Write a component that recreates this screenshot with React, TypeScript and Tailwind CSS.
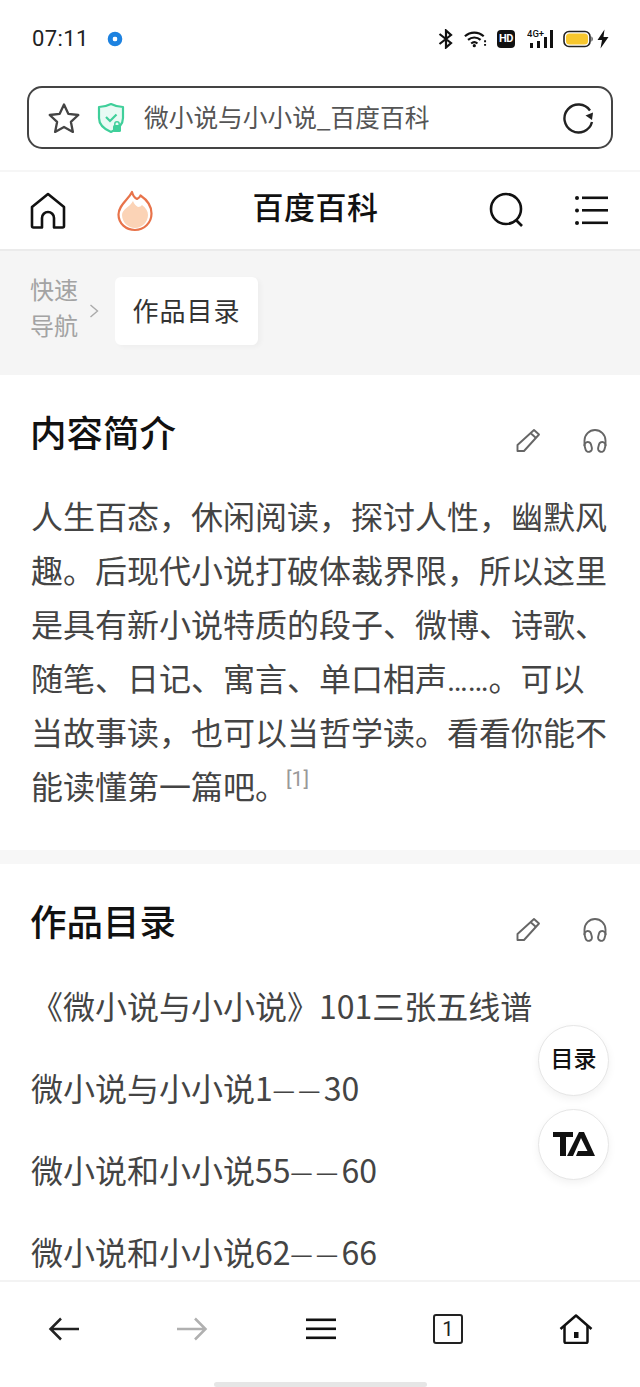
import type { ReactNode } from "react";

const cjk = "font-['Noto_Sans_CJK_SC','Noto_Sans',sans-serif]";

function StatusBar() {
    return (
        <div className="flex h-[78px] items-center justify-between pl-[32px] pr-[31px] pb-[1px]">
            <div className="flex items-center">
                <span className="font-['Roboto',sans-serif] text-[22px] leading-none tracking-[0.4px] text-[#222]">07:11</span>
                <svg width="16" height="16" viewBox="0 0 16 16" className="ml-[18px]">
                    <circle cx="8" cy="8" r="4.800" fill="none" stroke="#1d82e0" strokeWidth="5" />
                    <circle cx="8" cy="8" r="2.200" fill="#fff" />
                </svg>
            </div>
            <div className="flex items-center">
                <svg width="16" height="20" viewBox="0 0 16 20" fill="none" stroke="#111" strokeWidth="2.200">
                    <path d="M1.500 5 13 14l-5 4.500V1.500L13 6 1.500 15" />
                </svg>
                <svg width="26" height="20" viewBox="0 0 29 20" fill="none" stroke="#111" strokeWidth="2.400" className="ml-[10px]">
                    <path d="M1 7c6-5.500 15-5.500 21 0" />
                    <path d="M4.500 11c4-3.600 10-3.600 14 0" />
                    <path d="M8 15c2-1.700 5-1.700 7 0" />
                    <circle cx="11.500" cy="17.500" r="1.800" fill="#111" stroke="none" />
                    <path d="M23.500 11.500v2M23.500 15.500v2" strokeWidth="2.200" />
                </svg>
                <span className="ml-[7px] flex h-[18px] w-[18px] items-center justify-center rounded-[4px] bg-[#111] font-['Roboto',sans-serif] text-[11px] leading-none font-bold tracking-[-0.5px] text-white">HD</span>
                <svg width="28" height="20" viewBox="0 0 28 20" className="ml-[12px]">
                    <text x="0" y="8" fontSize="9.500" fontFamily="Roboto" fontWeight="500" fill="#111">4G+</text>
                    <rect x="3" y="14" width="3" height="5" fill="#111" />
                    <rect x="10" y="12" width="3" height="7" fill="#111" />
                    <rect x="17" y="8" width="3" height="11" fill="#111" />
                    <rect x="23" y="1" width="3" height="18" fill="#111" />
                </svg>
                <svg width="31" height="18" viewBox="0 0 31 18" className="ml-[8px]">
                    <rect x="1" y="1.500" width="26" height="15" rx="5" fill="#fff" stroke="#222" strokeWidth="1.600" />
                    <rect x="3" y="3.500" width="22" height="11" rx="3.500" fill="#f7c72e" />
                    <path d="M28.500 6.500c1.500.5 1.500 4.500 0 5z" fill="#222" />
                </svg>
                <svg width="12" height="20" viewBox="0 0 12 20" className="ml-[3px]">
                    <path d="M7.500 0.500 0.500 11h4.500l-1.500 8.500L11.500 8H6.500z" fill="#111" />
                </svg>
            </div>
        </div>
    );
}

function UrlBar() {
    return (
        <div className="px-[27px] pt-[8px] pb-[21px]">
            <div className="flex h-[63px] items-center rounded-[15px] border-[2.5px] border-[#444] pl-[18px] pr-[16px]">
                <svg width="34" height="32" viewBox="0 0 34 32" fill="none" stroke="#444" strokeWidth="2.300" strokeLinejoin="round">
                    <path d="M17 2.500l4.300 9.300 10 1.200-7.400 6.900 2 10L17 25l-8.900 4.900 2-10L2.700 13l10-1.200z" />
                </svg>
                <svg width="30" height="32" viewBox="0 0 30 32" fill="none" className="ml-[15px]">
                    <path d="M15 2c4 2 7.500 3 12 3v11c0 7-5 11-12 14C8 27 3 23 3 16V5c4.500 0 8-1 12-3z" fill="#e9faf4" stroke="#3fcf9a" strokeWidth="2.200" strokeLinejoin="round" />
                    <path d="M10 15l4 4 6.500-6.500" stroke="#3fcf9a" strokeWidth="2.200" />
                    <rect x="17" y="23" width="8" height="7" rx="1.500" fill="#3fcf9a" />
                    <path d="M18.800 23.500v-1.500a2.200 2.200 0 0 1 4.400 0v1.500" stroke="#3fcf9a" strokeWidth="1.500" />
                </svg>
                <span className={`${cjk} ml-[18px] flex-1 pb-[2px] text-[24.7px] leading-none font-normal text-[#555]`}>微小说与小小说_百度百科</span>
                <svg width="32" height="32" viewBox="0 0 32 32" fill="none" stroke="#222" strokeWidth="2.400">
                    <path d="M27 8.500A14 14 0 1 0 29 20" />
                    <path d="M30 10.500l-1 7.500-6.500-4.500z" fill="#222" stroke="none" />
                </svg>
            </div>
        </div>
    );
}

function NavBar() {
    return (
        <div className="relative flex h-[81px] items-center justify-between border-y-2 border-t-[#f6f6f6] border-b-[#ebebeb] pl-[30px] pr-[32px]">
            <div className="flex items-center">
                <svg width="36" height="38" viewBox="0 0 36 38" fill="none" stroke="#111" strokeWidth="2.600" strokeLinejoin="round">
                    <path d="M2 15 18 2l16 13v19a1.500 1.500 0 0 1-1.500 1.500H24V26a6 6 0 0 0-12 0v9.500H3.500A1.500 1.500 0 0 1 2 34z" />
                </svg>
                <svg width="38" height="42" viewBox="0 0 38 42" fill="none" className="ml-[50px]">
                    <path d="M16 2c1 4 3 6 5 7 2-1 3-2 3.500-3.500 6 4 11 10 11 18 0 9.500-7.500 16.500-16.500 16.500S2.500 33.500 2.500 24.500C2.500 15 12 10 16 2z" fill="#fff" stroke="#e8734a" strokeWidth="2.200" strokeLinejoin="round" />
                    <path d="M17 11c1 3 3 5 5 6 2 0 3-1 4-2 4 3 6 6 6 10 0 7-6 13-13 13S6 32 6 25c0-6 8-8 11-14z" fill="#fbd3b6" />
                </svg>
            </div>
            <span className={`${cjk} absolute left-0 right-[9px] -translate-y-[5px] text-center text-[31px] leading-none font-medium tracking-[0.5px] text-[#111]`}>百度百科</span>
            <div className="flex -translate-y-[1px] items-center">
                <svg width="36" height="36" viewBox="0 0 36 36" fill="none" stroke="#111" strokeWidth="2.600">
                    <circle cx="17" cy="17" r="15" />
                    <path d="M27 28l6 6" />
                </svg>
                <svg width="34" height="32" viewBox="0 0 34 32" fill="#111" className="ml-[49px]">
                    <circle cx="3" cy="4" r="2" />
                    <circle cx="3" cy="16.500" r="2" />
                    <circle cx="3" cy="29" r="2" />
                    <rect x="8" y="2.500" width="26" height="2.600" />
                    <rect x="8" y="15" width="26" height="2.600" />
                    <rect x="8" y="27.500" width="26" height="2.600" />
                </svg>
            </div>
        </div>
    );
}

function QuickNav() {
    return (
        <div className="flex h-[124px] items-center bg-[#f5f5f5] pl-[30px]">
            <div className={`${cjk} mb-[12px] w-[48px] text-[24px] leading-[36px] font-normal text-[#a3a3a3]`}>
                快速
                <br />
                导航
            </div>
            <svg width="10" height="16" viewBox="0 0 10 16" fill="none" stroke="#aaa" strokeWidth="1.400" className="mb-[4px] ml-[11px]">
                <path d="M1.500 2l7 6-7 6" />
            </svg>
            <div className={`${cjk} mb-[5px] ml-[16px] flex h-[68px] w-[143px] items-center justify-center rounded-[6px] bg-white pb-[2px] text-[26px] leading-none font-normal tracking-[1px] text-[#333] shadow-[3px_2px_5px_rgba(0,0,0,0.03)]`}>
                作品目录
            </div>
        </div>
    );
}

function Section({ title, children }: { title: string; children: ReactNode }) {
    return (
        <div className="px-[31px]">
            <div className="flex items-center justify-between">
                <h2 className={`${cjk} -ml-[1px] translate-y-[1px] text-[36.5px] leading-[54px] font-medium text-[#111]`}>{title}</h2>
                <div className="mt-[20px] flex items-center">
                    <svg width="26" height="26" viewBox="0 0 26 26" fill="none" stroke="#666" strokeWidth="1.900" strokeLinejoin="round" className="-translate-x-[2px]">
                        <path d="M19 2l5 4.500L9 23H2.500v-6z" />
                        <path d="M16 5.500l5 4.500" />
                    </svg>
                    <svg width="26" height="26" viewBox="0 0 26 26" fill="none" stroke="#666" strokeWidth="1.900" className="ml-[39px] mr-[1px]">
                        <path d="M2.500 18v-5.500a10.500 10.500 0 0 1 21 0V18" />
                        <rect x="3" y="14" width="6.500" height="10" rx="3.200" transform="rotate(-15 6 19)" />
                        <rect x="16.500" y="14" width="6.500" height="10" rx="3.200" transform="rotate(15 20 19)" />
                    </svg>
                </div>
            </div>
            {children}
        </div>
    );
}

const catalog = [
    { before: "《微小说与小小说》101三张五线谱", after: "" },
    { before: "微小说与小小说1", after: "30" },
    { before: "微小说和小小说55", after: "60" },
    { before: "微小说和小小说62", after: "66" },
];

function BottomBar() {
    return (
        <div className="flex h-[107px] flex-col border-t-2 border-[#f3f3f3] bg-white">
            <div className="flex h-[94px] items-center justify-between pl-[48px] pr-[47px]">
                <svg width="32" height="28" viewBox="0 0 32 28" fill="none" stroke="#222" strokeWidth="2.500">
                    <path d="M31 14H3M13 3.500 2.500 14 13 24.500" />
                </svg>
                <svg width="32" height="28" viewBox="0 0 32 28" fill="none" stroke="#b0b0b0" strokeWidth="2.500">
                    <path d="M1 14h28M19 3.500 29.500 14 19 24.500" />
                </svg>
                <svg width="32" height="24" viewBox="0 0 32 24" fill="#111">
                    <rect x="1" y="1.500" width="30" height="2.600" />
                    <rect x="1" y="10.500" width="30" height="2.600" />
                    <rect x="1" y="19.500" width="30" height="2.600" />
                </svg>
                <div className="flex h-[30px] w-[30px] items-center justify-center rounded-[3px] border-2 border-[#222] font-['Roboto',sans-serif] text-[20px] leading-none text-[#222]">1</div>
                <svg width="34" height="30" viewBox="0 0 34 30" fill="none" stroke="#111" strokeWidth="2.500" strokeLinejoin="round">
                    <path d="M1.500 15 17 1.500 32.500 15" />
                    <path d="M5.500 12v15.500A1.500 1.500 0 0 0 7 29h20a1.500 1.500 0 0 0 1.500-1.500V12" />
                    <rect x="15" y="18" width="4.500" height="6" fill="#111" stroke="none" />
                </svg>
            </div>
            <div className="flex flex-1 items-start justify-center pt-[7px]">
                <div className="h-[5px] w-[213px] rounded-full bg-[#e6e6e6]" />
            </div>
        </div>
    );
}

export default function App() {
    return (
        <div className={`${cjk} relative flex h-[1387px] w-[640px] flex-col overflow-hidden bg-white`}>
            <StatusBar />
            <UrlBar />
            <NavBar />
            <div className="min-h-0 flex-1 overflow-hidden">
                <QuickNav />
                <div className="h-[489px] border-b-[14px] border-[#f7f7f7] pt-[29px]">
                    <Section title="内容简介">
                        <p className="mt-[30px] w-[577px] text-[32px] leading-[54px] font-normal text-[#444]">
                            人生百态，休闲阅读，探讨人性，幽默风趣。后现代小说打破体裁界限，所以这里是具有新小说特质的段子、微博、诗歌、随笔、日记、寓言、单口相声
                            <span className="font-['Roboto',sans-serif] text-[31px] leading-none">……</span>
                            。可以当故事读，也可以当哲学读。看看你能不能读懂第一篇吧。
                            <sup className="top-[-13px] -ml-[1px] font-['Roboto',sans-serif] text-[21px] leading-none text-[#999]">[1]</sup>
                        </p>
                    </Section>
                </div>
                <div className="pt-[29px]">
                    <Section title="作品目录">
                        <div className="mt-[31px] flex flex-col gap-[28px]">
                            {catalog.map((line) => (
                                <p key={line.before} className="h-[54px] text-[32px] leading-[54px] font-normal whitespace-nowrap text-[#444]">
                                    {line.before}
                                    {line.after && (
                                        <span className="align-[3px] font-['Open_Sans',sans-serif] text-[22px] leading-none font-medium tracking-[3.5px]">——</span>
                                    )}
                                    {line.after}
                                </p>
                            ))}
                        </div>
                    </Section>
                </div>
            </div>
            <BottomBar />
            <div className="absolute top-[1025px] left-[538px] flex flex-col gap-[13px]">
                <div className="flex h-[71px] w-[71px] items-center justify-center rounded-full border border-[#e6e6e6] bg-white pb-[6px] text-[23px] font-medium text-[#111] shadow-[0_3px_8px_rgba(0,0,0,0.06)]">目录</div>
                <div className="flex h-[71px] w-[71px] items-center justify-center rounded-full border border-[#e6e6e6] bg-white pb-[2px] shadow-[0_3px_8px_rgba(0,0,0,0.06)]">
                    <svg width="42" height="24" viewBox="0 0 42 24" fill="#111">
                        <path d="M0 0h20v5h-7v19H7V5H0z" />
                        <path d="M26 0h5l11 24H23l2-5h9.500L28 6 20 24h-6z" />
                    </svg>
                </div>
            </div>
        </div>
    );
}
